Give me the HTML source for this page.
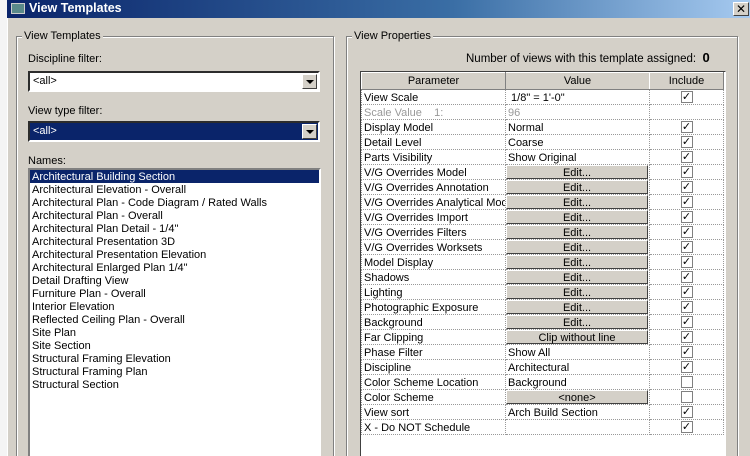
<!DOCTYPE html>
<html style="overflow:hidden;width:750px;height:456px"><head><meta charset="utf-8"><style>
*{margin:0;padding:0;box-sizing:border-box}
body{width:750px;height:456px;overflow:hidden;background:#d4d0c8;font-family:"Liberation Sans","DejaVu Sans",sans-serif;font-size:11px;color:#000;position:relative}
.a{position:absolute}
.title{left:7px;top:0;width:743px;height:18px;background:linear-gradient(90deg,#0a246a,#3a6ea5 60%,#a6caf0);color:#fff;font-weight:bold;font-size:12.5px;line-height:17px;padding-left:22px}
.grp{border:1px solid #808080;box-shadow:1px 1px 0 #fff inset,1px 1px 0 #fff}
.lbl{background:#d4d0c8;padding:0 2px}
.combo{background:#fff;border:2px inset #c0c0c0;border-color:#808080 #fff #fff #808080;height:21px;line-height:17px;padding-left:3px}
.btn{position:absolute;right:1px;top:1px;width:15px;height:15px;background:#d4d0c8;border:1px solid;border-color:#fff #404040 #404040 #fff}
.btn:after{content:"";position:absolute;left:3px;top:5px;border:4px solid transparent;border-top:4px solid #000;border-bottom:0}
.list{background:#fff;border:2px solid;border-color:#808080 #fff #fff #808080}
.list div{height:13px;line-height:14px;padding-left:2px;white-space:nowrap}
table{border-collapse:collapse;table-layout:fixed}
td{height:15px;border:1px dotted #999;padding:0 2px;white-space:nowrap;overflow:hidden;line-height:13px}
td>b{font-weight:normal;position:relative;top:1px}
th{height:17px;font-weight:normal;background:#d4d0c8;border:1px solid #808080;border-top-color:#fff;border-left-color:#fff}
.e{padding:0}
.e span{display:block;height:14px;background:#d4d0c8;border:1px solid;border-color:#fff #404040 #404040 #fff;text-align:center;line-height:14px;margin-right:1px}
.cb{text-align:center;padding:0}
.cb i{display:inline-block;width:12px;height:12px;border:1px solid #808080;background:#fff;vertical-align:middle;position:relative;font-style:normal;font-size:11px;line-height:10px;font-weight:bold}
</style></head><body>
<div class="a" style="left:0;top:0;width:7px;height:456px;background:#f4f4f4"></div>
<div class="a title"><span class="a" style="left:4px;top:3px;width:14px;height:11px;background:#5a8a8a;border:1px solid #ccc"></span>View Templates</div>
<div class="a" style="left:733px;top:2px;width:16px;height:14px;background:#d4d0c8;border:1px solid;border-color:#fff #404040 #404040 #fff;font-size:12px;font-weight:bold;text-align:center;line-height:12px">✕</div>
<div class="a" style="left:7px;top:18px;width:2px;height:438px;background:#d4d0c8;border-left:1px solid #fff"></div>

<div class="a grp" style="left:16px;top:36px;width:318px;height:430px"></div>
<div class="a lbl" style="left:22px;top:30px">View Templates</div>
<div class="a" style="left:28px;top:53px">Discipline filter:</div>
<div class="a combo" style="left:28px;top:71px;width:292px">&lt;all&gt;<span class="btn"></span></div>
<div class="a" style="left:28px;top:105px">View type filter:</div>
<div class="a combo" style="left:28px;top:121px;width:292px;background:#0a246a;color:#fff">&lt;all&gt;<span class="btn"></span></div>
<div class="a" style="left:28px;top:155px">Names:</div>
<div class="a list" style="left:28px;top:168px;width:293px;height:300px">
<div style="background:#0a246a;color:#fff">Architectural Building Section</div>
<div>Architectural Elevation - Overall</div>
<div>Architectural Plan - Code Diagram / Rated Walls</div>
<div>Architectural Plan - Overall</div>
<div>Architectural Plan Detail - 1/4"</div>
<div>Architectural Presentation 3D</div>
<div>Architectural Presentation Elevation</div>
<div>Architectural Enlarged Plan 1/4"</div>
<div>Detail Drafting View</div>
<div>Furniture Plan - Overall</div>
<div>Interior Elevation</div>
<div>Reflected Ceiling Plan - Overall</div>
<div>Site Plan</div>
<div>Site Section</div>
<div>Structural Framing Elevation</div>
<div>Structural Framing Plan</div>
<div>Structural Section</div>
</div>

<div class="a grp" style="left:346px;top:36px;width:392px;height:430px"></div>
<div class="a lbl" style="left:352px;top:30px">View Properties</div>
<div class="a" style="left:466px;top:50px;font-size:11.5px">Number of views with this template assigned:&nbsp; <b style="font-size:13px">0</b></div>
<div class="a" style="left:360px;top:71px;width:366px;height:400px;background:#fff;border:1px solid #404040;border-right-color:#fff"></div>
<table class="a" style="left:361px;top:72px;width:362px">
<col style="width:144px"><col style="width:144px"><col style="width:74px">
<tr><th>Parameter</th><th style="border-left:1px dotted #000;border-right:1px dotted #000">Value</th><th>Include</th></tr>
<tr><td><b>View Scale</b></td><td><b>&nbsp;1/8" = 1'-0"</b></td><td class="cb"><i>✓</i></td></tr>
<tr style="color:#999"><td><b>Scale Value &nbsp;&nbsp; 1:</b></td><td><b>96</b></td><td></td></tr>
<tr><td><b>Display Model</b></td><td><b>Normal</b></td><td class="cb"><i>✓</i></td></tr>
<tr><td><b>Detail Level</b></td><td><b>Coarse</b></td><td class="cb"><i>✓</i></td></tr>
<tr><td><b>Parts Visibility</b></td><td><b>Show Original</b></td><td class="cb"><i>✓</i></td></tr>
<tr><td><b>V/G Overrides Model</b></td><td class="e"><span>Edit...</span></td><td class="cb"><i>✓</i></td></tr>
<tr><td><b>V/G Overrides Annotation</b></td><td class="e"><span>Edit...</span></td><td class="cb"><i>✓</i></td></tr>
<tr><td><b>V/G Overrides Analytical Model</b></td><td class="e"><span>Edit...</span></td><td class="cb"><i>✓</i></td></tr>
<tr><td><b>V/G Overrides Import</b></td><td class="e"><span>Edit...</span></td><td class="cb"><i>✓</i></td></tr>
<tr><td><b>V/G Overrides Filters</b></td><td class="e"><span>Edit...</span></td><td class="cb"><i>✓</i></td></tr>
<tr><td><b>V/G Overrides Worksets</b></td><td class="e"><span>Edit...</span></td><td class="cb"><i>✓</i></td></tr>
<tr><td><b>Model Display</b></td><td class="e"><span>Edit...</span></td><td class="cb"><i>✓</i></td></tr>
<tr><td><b>Shadows</b></td><td class="e"><span>Edit...</span></td><td class="cb"><i>✓</i></td></tr>
<tr><td><b>Lighting</b></td><td class="e"><span>Edit...</span></td><td class="cb"><i>✓</i></td></tr>
<tr><td><b>Photographic Exposure</b></td><td class="e"><span>Edit...</span></td><td class="cb"><i>✓</i></td></tr>
<tr><td><b>Background</b></td><td class="e"><span>Edit...</span></td><td class="cb"><i>✓</i></td></tr>
<tr><td><b>Far Clipping</b></td><td class="e"><span>Clip without line</span></td><td class="cb"><i>✓</i></td></tr>
<tr><td><b>Phase Filter</b></td><td><b>Show All</b></td><td class="cb"><i>✓</i></td></tr>
<tr><td><b>Discipline</b></td><td><b>Architectural</b></td><td class="cb"><i>✓</i></td></tr>
<tr><td><b>Color Scheme Location</b></td><td><b>Background</b></td><td class="cb"><i></i></td></tr>
<tr><td><b>Color Scheme</b></td><td class="e"><span>&lt;none&gt;</span></td><td class="cb"><i></i></td></tr>
<tr><td><b>View sort</b></td><td><b>Arch Build Section</b></td><td class="cb"><i>✓</i></td></tr>
<tr><td><b>X - Do NOT Schedule</b></td><td></td><td class="cb"><i>✓</i></td></tr>
</table>
</body></html>
